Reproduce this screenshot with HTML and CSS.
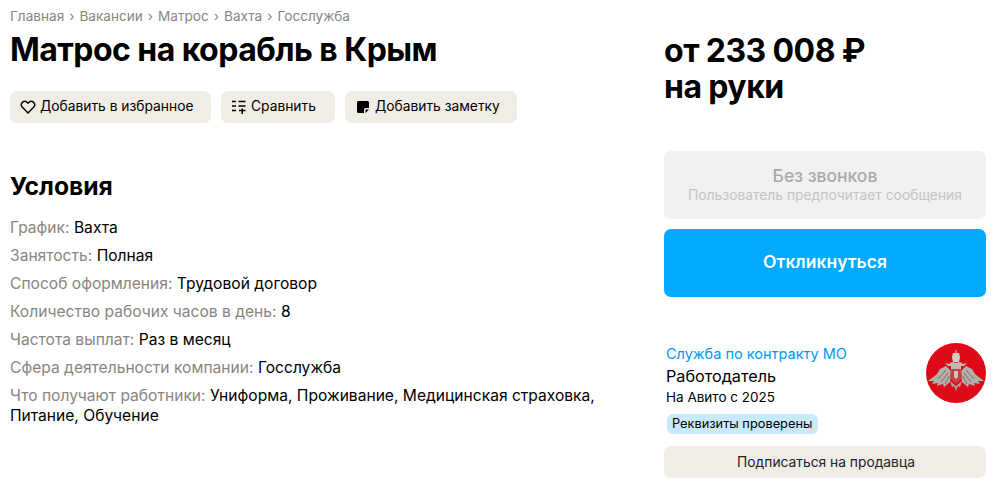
FILE: index.html
```html
<!DOCTYPE html>
<html lang="ru">

<head>
    <meta charset="UTF-8" />
    <meta name="viewport" content="width=device-width, initial-scale=1.0" />
    <title>Матрос на корабль в Крым</title>
    <link rel="stylesheet" href="styles.css">
</head>

<body>
    <main class="page">
        <div class="content">
            <nav class="crumbs">
                <a>Главная</a><span class="sep">›</span>
                <a>Вакансии</a><span class="sep">›</span>
                <a>Матрос</a><span class="sep">›</span>
                <a>Вахта</a><span class="sep">›</span>
                <a>Госслужба</a>
            </nav>
            <h1 class="title">Матрос на корабль в Крым</h1>
            <div class="actions">
                <button class="action action-fav">
                    <svg width="16" height="16" viewBox="0 0 16 16" fill="none" stroke="#000" stroke-width="1.4">
                        <path d="M8 14 2.400 8.300A3.500 3.500 0 0 1 2.200 3.500 3.500 3.500 0 0 1 7 3.300L8 4.300 9 3.300A3.500 3.500 0 0 1 13.800 3.500 3.500 3.500 0 0 1 13.600 8.300Z" stroke-linejoin="round" />
                    </svg>
                    <span>Добавить в избранное</span>
                </button>
                <button class="action action-compare">
                    <svg width="16" height="16" viewBox="0 0 16 16" fill="none" stroke="#000" stroke-width="1.5">
                        <path d="M1 2.500h4M7.500 2.500h7M1 7h4M7.500 7h7M1 11.500h4M8 11.500h6.500M11.200 9.500v5.500" />
                    </svg>
                    <span>Сравнить</span>
                </button>
                <button class="action action-note">
                    <svg width="16" height="16" viewBox="0 0 16 16">
                        <path d="M3.500 2h9A1.500 1.500 0 0 1 14 3.500V9H10.500A1.500 1.500 0 0 0 9 10.500V14H3.500A1.500 1.500 0 0 1 2 12.500v-9A1.500 1.500 0 0 1 3.500 2ZM10.500 14V10.500H14Z" fill="#000" />
                    </svg>
                    <span>Добавить заметку</span>
                </button>
            </div>
            <h2 class="section-title">Условия</h2>
            <ul class="params">
                <li><span class="label">График:</span> <span>Вахта</span></li>
                <li><span class="label">Занятость:</span> <span>Полная</span></li>
                <li><span class="label">Способ оформления:</span> <span>Трудовой договор</span></li>
                <li><span class="label">Количество рабочих часов в день:</span> <span>8</span></li>
                <li><span class="label">Частота выплат:</span> <span>Раз в месяц</span></li>
                <li><span class="label">Сфера деятельности компании:</span> <span>Госслужба</span></li>
                <li><span class="label">Что получают работники:</span> <span>Униформа, Проживание, Медицинская страховка,</span> <span>Питание, Обучение</span></li>
            </ul>
        </div>

        <aside class="side">
            <div class="price">от 233 008 ₽<br>на руки</div>
            <div class="no-calls">
                <div class="no-calls-main">Без звонков</div>
                <div class="no-calls-sub">Пользователь предпочитает сообщения</div>
            </div>
            <button class="respond">Откликнуться</button>
            <div class="seller">
                <div class="seller-info">
                    <a class="seller-name">Служба по контракту МО</a>
                    <div class="seller-role">Работодатель</div>
                    <div class="seller-since">На Авито с 2025</div>
                    <span class="seller-badge">Реквизиты проверены</span>
                </div>
                <svg class="seller-logo" width="60" height="60" viewBox="0 0 60 60">
                    <circle cx="30" cy="30" r="30" fill="#de0a17" />
                    <!-- wings -->
                    <path d="M25 28 20 23 14 26 11 31 2 38 8 38 6 41 12 40 11 43 17 41 18 44 24 39Z" fill="#b5aeaa" />
                    <path d="M35 28 40 23 46 26 49 31 58 38 52 38 54 41 48 40 49 43 43 41 42 44 36 39Z" fill="#b5aeaa" />
                    <path d="M20 27 12 36M22 30 15 39M23 33 19 41M40 27 48 36M38 30 45 39M37 33 41 41" stroke="#77706c" stroke-width="1" fill="none" />
                    <!-- crown and heads -->
                    <path d="M27 10h6l1 4-1 5h-6l-1-5Z" fill="#d3cdca" />
                    <path d="M29.500 7h1v3h-1Z" fill="#d3cdca" />
                    <path d="M30 20 26 19 23 21 19 20 22 23 25 23 25 27H35V23H38L41 20 37 21 34 19Z" fill="#bfb8b4" />
                    <!-- body and shield -->
                    <path d="M25 26H35L36 35 30 41 24 35Z" fill="#c8403f" />
                    <path d="M28 28h4v6l-2 2-2-2Z" fill="#cbc5c2" />
                    <!-- tail -->
                    <path d="M24 38 30 43 36 38 34 44 32 43 30 48 28 43 26 44Z" fill="#a8a19d" />
                </svg>
            </div>
            <button class="subscribe">Подписаться на продавца</button>
        </aside>
    </main>
</body>

</html>
```

FILE: styles.css
```css
* {
    box-sizing: border-box;
}

html,
body {
    margin: 0;
    background-color: #fff;
    color: #000;
    font-family: "Inter", "Noto Sans", sans-serif;
}

button {
    border: 0;
    font-family: inherit;
    color: inherit;
}

.page {
    display: flex;
    justify-content: space-between;
    padding: 8px 12px 0 10px;
}

.content {
    width: 600px;
}

.crumbs {
    display: flex;
    align-items: center;
    height: 16px;
    font-size: 13.600px;
    line-height: 16px;
    color: #8a8580;
}

.sep {
    margin: 0 5px;
}

.title {
    margin: 6px 0 0;
    font-size: 32px;
    line-height: 40px;
    font-weight: 700;
    letter-spacing: -0.55px;
}

.actions {
    display: flex;
    gap: 10px;
    margin-top: 21px;
}

.action {
    display: flex;
    align-items: center;
    gap: 4px;
    height: 32px;
    padding: 0 10px 2px;
    border-radius: 7px;
    background-color: #f0ede7;
    font-size: 13.800px;
}

.action svg {
    margin-top: 2px;
}

.action-fav {
    width: 201px;
}

.action-compare {
    width: 114px;
}

.action-note {
    width: 172px;
}

.section-title {
    margin: 47px 0 0;
    font-size: 24.700px;
    line-height: 32px;
    font-weight: 700;
}

.params {
    list-style: none;
    margin: 16px 0 0;
    padding: 0;
    font-size: 15.600px;
    line-height: 20px;
}

.params li {
    margin-bottom: 8px;
}

.label {
    color: #8a8580;
}

.side {
    width: 322px;
}

.price {
    margin-top: 25px;
    font-size: 32px;
    line-height: 36px;
    font-weight: 700;
    letter-spacing: -0.5px;
    word-spacing: -0.3px;
}

.no-calls {
    display: flex;
    flex-direction: column;
    align-items: center;
    justify-content: center;
    height: 68px;
    margin-top: 46px;
    padding-bottom: 2px;
    border-radius: 7px;
    background-color: #f2f1f0;
}

.no-calls-main {
    font-size: 17.500px;
    line-height: 20px;
    font-weight: 500;
    color: #a9a9a9;
}

.no-calls-sub {
    margin-top: 1px;
    font-size: 13.850px;
    line-height: 16px;
    color: #c4c4c4;
}

.respond {
    display: block;
    width: 100%;
    height: 68px;
    margin-top: 10px;
    padding-bottom: 4px;
    border-radius: 7px;
    background-color: #00aaff;
    color: #fff;
    font-size: 17.500px;
    font-weight: 600;
}

.seller {
    display: flex;
    justify-content: space-between;
    margin-top: 47px;
    padding-left: 2px;
}

.seller-info {
    display: flex;
    flex-direction: column;
    align-items: flex-start;
}

.seller-name {
    font-size: 14.500px;
    line-height: 20px;
    color: #0099f7;
}

.seller-role {
    margin-top: 2px;
    font-size: 16.200px;
    line-height: 20px;
}

.seller-since {
    margin-top: 1px;
    font-size: 13.500px;
    line-height: 20px;
}

.seller-badge {
    margin: 7px 0 0 1px;
    padding: 0 6px 0 5px;
    height: 20px;
    border-radius: 6px;
    background-color: #c7eaff;
    font-size: 12.800px;
    line-height: 20px;
}

.seller-logo {
    margin-top: -1px;
    flex: none;
}

.subscribe {
    display: block;
    width: 100%;
    height: 32px;
    margin-top: 12px;
    padding-right: 4px;
    border-radius: 7px;
    background-color: #f0ede7;
    color: #222;
    font-size: 13.800px;
}
```
